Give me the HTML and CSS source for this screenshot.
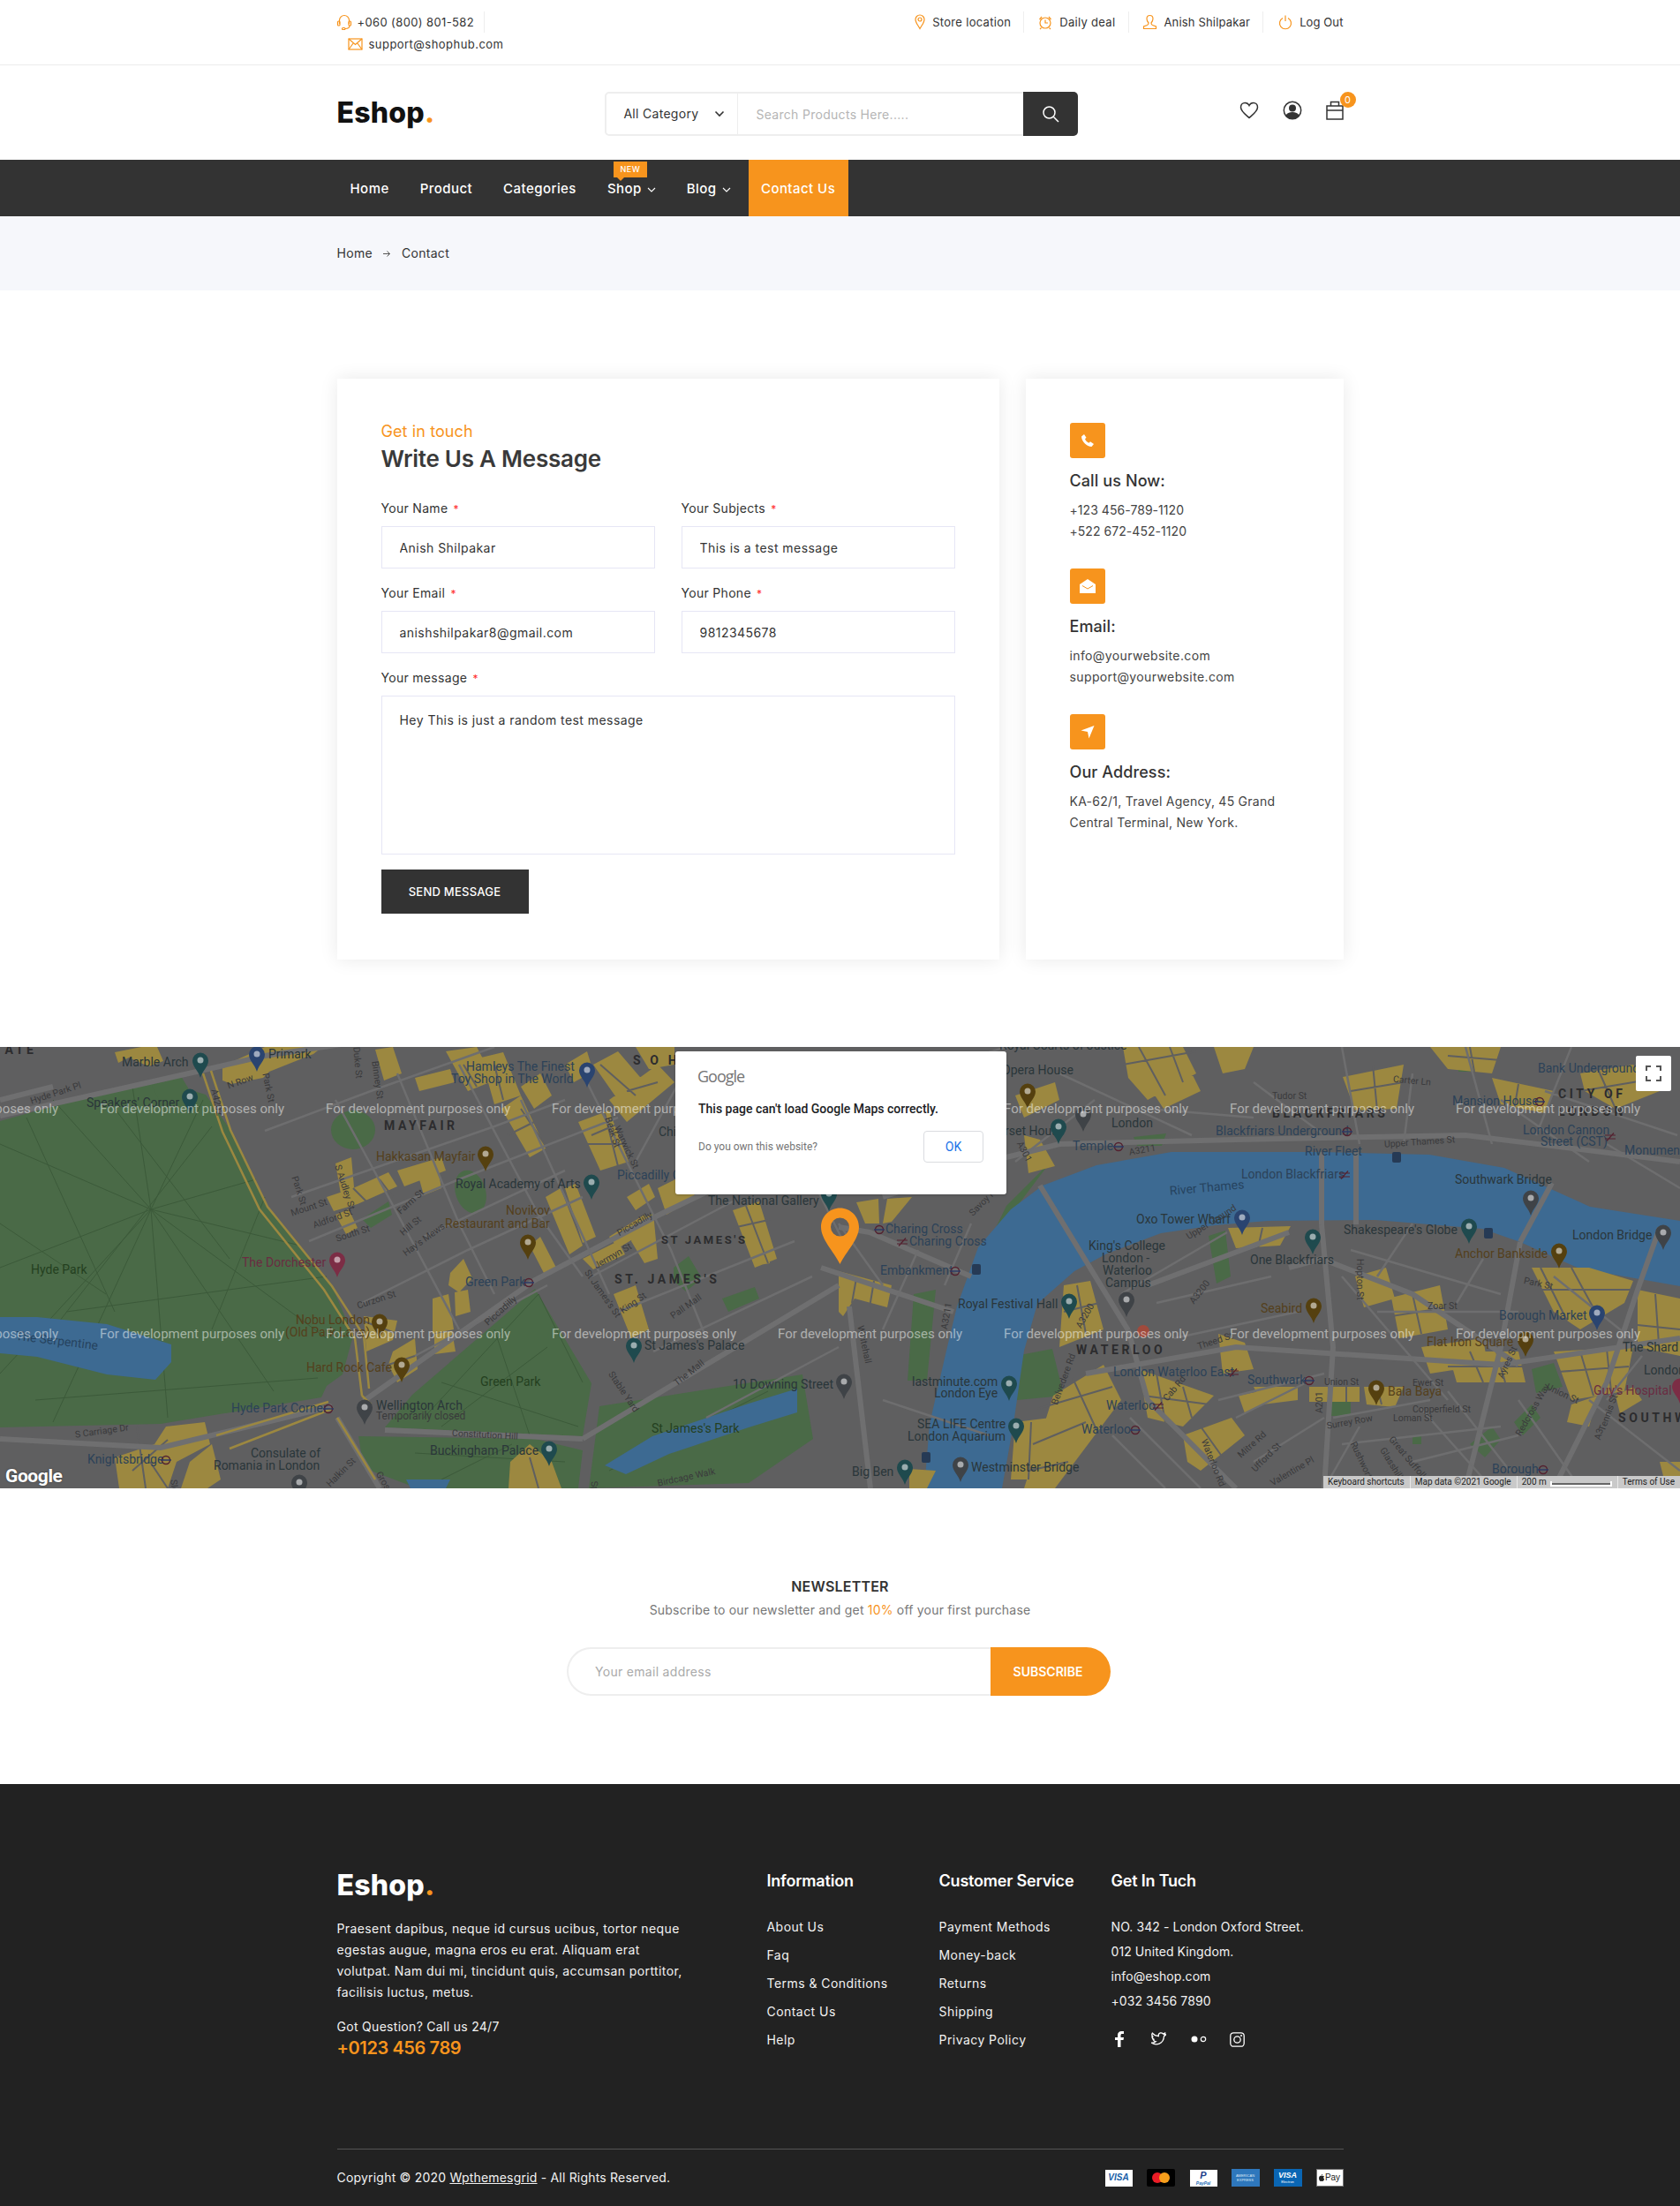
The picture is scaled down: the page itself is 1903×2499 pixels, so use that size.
FILE: index.html
```html
<!DOCTYPE html>
<html lang="en">
<head>
<meta charset="utf-8">
<title>Eshop - Contact</title>
<link rel="stylesheet" href="styles.css">
</head>
<body>
<header>
  <div class="topbar">
    <div class="wrap topbar-in">
      <ul class="top-left">
        <li class="top-phone"><svg class="ti" width="18" height="18" viewBox="0 0 18 18"><path d="M3.5 11V7a5.5 5.5 0 0 1 11 0v4"/><rect x="1.5" y="8" width="2.5" height="5" rx="1"/><rect x="14" y="8" width="2.5" height="5" rx="1"/><path d="M15 13c0 2.500-2.500 3.500-5 3.500"/><rect x="6.500" y="15.500" width="3.500" height="2" rx="1"/></svg>+060 (800) 801-582</li>
        <li class="top-mail"><svg class="ti" width="17" height="14" viewBox="0 0 17 14"><rect x="1" y="1" width="15" height="12"/><path d="M1 1l7.500 6.500L16 1M1 13l5.500-7.500M16 13l-5.500-7.500"/></svg>support@shophub.com</li>
      </ul>
      <ul class="top-right">
        <li class="sl"><svg class="ti" width="12" height="18" viewBox="0 0 12 18"><path d="M6 16.500C3.500 12 1 9.500 1 6a5 5 0 0 1 10 0c0 3.500-2.500 6-5 10.500z"/><circle cx="6" cy="6" r="2"/></svg>Store location</li>
        <li class="dd"><svg class="ti" width="16" height="17" viewBox="0 0 16 17"><circle cx="8" cy="9" r="6"/><path d="M8 5.500V9h3M1.500 5L4 2M14.500 5L12 2M3.500 14.500L2 16M12.500 14.500L14 16"/></svg>Daily deal</li>
        <li class="an"><svg class="ti" width="17" height="18" viewBox="0 0 17 18"><path d="M8.500 1.500c-2.300 0-3.500 1.700-3.500 3.800 0 2 1 3.500 2 4.700 0 1.500-.5 2-1.500 2.500L1.500 14v2.500h14V14l-4-1.500c-1-.5-1.500-1-1.500-2.500 1-1.200 2-2.700 2-4.700 0-2.100-1.200-3.800-3.500-3.800z"/></svg>Anish Shilpakar</li>
        <li class="lo"><svg class="ti" width="16" height="18" viewBox="0 0 16 18"><path d="M5 4.500a6.500 6.500 0 1 0 6 0M8 1.500V8"/></svg>Log Out</li>
      </ul>
    </div>
  </div>
  <div class="wrap middle">
    <a class="logo">Eshop<span>.</span></a>
    <div class="search">
      <div class="cat">All Category<svg width="12" height="8" viewBox="0 0 12 8"><path d="M1.500 1.500L6 6l4.500-4.500"/></svg></div>
      <input class="search-in" type="text" placeholder="Search Products Here.....">
      <button class="search-btn" aria-label="Search"><svg width="20" height="20" viewBox="0 0 20 20"><circle cx="8.500" cy="8.500" r="6.500"/><path d="M13.500 13.500L19 19"/></svg></button>
    </div>
    <div class="actions">
      <svg width="22" height="20" viewBox="0 0 22 20" class="act"><path d="M11 18.500C6 14 1.500 11 1.500 6.500 1.500 3.500 3.700 1.500 6.300 1.500c2 0 3.700 1 4.700 3 1-2 2.700-3 4.700-3 2.600 0 4.800 2 4.800 5 0 4.500-4.500 7.500-9.500 12z"/></svg>
      <svg width="22" height="22" viewBox="0 0 22 22" class="act"><circle cx="11" cy="11" r="9.700"/><circle class="fillc" cx="11" cy="8.500" r="4"/><path class="fillc" d="M3.500 17c1-3 4-4 7.500-4s6.500 1 7.500 4c-2 2.500-4.700 4-7.500 4s-5.500-1.500-7.500-4z"/></svg>
      <div class="cart"><svg width="20" height="22" viewBox="0 0 20 22" class="act"><rect x="1" y="6" width="18" height="15"/><path d="M1 11h18M5.500 6V1.500h9V6"/></svg><span class="badge">0</span></div>
    </div>
  </div>
  <nav class="nav">
    <ul class="wrap nav-in">
      <li class="n-home">Home</li>
      <li class="n-prod">Product</li>
      <li class="n-cat">Categories</li>
      <li class="n-shop">Shop<svg class="chev" width="10" height="7" viewBox="0 0 10 7"><path d="M1 1l4 4 4-4"/></svg><span class="new">NEW</span></li>
      <li class="n-blog">Blog<svg class="chev" width="10" height="7" viewBox="0 0 10 7"><path d="M1 1l4 4 4-4"/></svg></li>
      <li class="n-contact">Contact Us</li>
    </ul>
  </nav>
</header>

<section class="crumbs">
  <div class="wrap crumbs-in">Home<svg width="10" height="9" viewBox="0 0 10 9"><path d="M1 4.500h7.500M5.500 1.500l3 3-3 3"/></svg><span>Contact</span></div>
</section>

<main>
  <section class="wrap contact">
    <form class="card form-card">
      <p class="eyebrow">Get in touch</p>
      <h1>Write Us A Message</h1>
      <div class="fields">
        <label class="field"><span class="lab">Your Name <i>*</i></span><input type="text" value="Anish Shilpakar"></label>
        <label class="field"><span class="lab">Your Subjects <i>*</i></span><input type="text" value="This is a test message"></label>
        <label class="field"><span class="lab">Your Email <i>*</i></span><input type="text" value="anishshilpakar8@gmail.com"></label>
        <label class="field"><span class="lab">Your Phone <i>*</i></span><input type="text" value="9812345678"></label>
        <label class="field wide"><span class="lab">Your message <i>*</i></span><textarea>Hey This is just a random test message</textarea></label>
      </div>
      <button class="send" type="button">SEND MESSAGE</button>
    </form>
    <aside class="card info-card">
      <div class="info">
        <div class="ibox"><svg width="16" height="16" viewBox="0 0 16 16"><path d="M1 3.500L4 1l2.500 3.800L5 6.300c.8 2 2.500 3.600 4.500 4.500L11 9.300 15 12l-2.500 3C7 15 1 9 1 3.500z"/></svg></div>
        <h3>Call us Now:</h3>
        <p>+123 456-789-1120<br>+522 672-452-1120</p>
      </div>
      <div class="info">
        <div class="ibox"><svg width="20" height="18" viewBox="0 0 20 18"><path d="M1 7L10 1l9 6v10H1z"/><path class="env" d="M4 8.500l6 3.500 6-3.500"/></svg></div>
        <h3>Email:</h3>
        <p>info@yourwebsite.com<br>support@yourwebsite.com</p>
      </div>
      <div class="info">
        <div class="ibox"><svg width="16" height="16" viewBox="0 0 16 16"><path d="M15.500 1L9.500 15.500 8 8 .5 6.500z"/></svg></div>
        <h3>Our Address:</h3>
        <p>KA-62/1, Travel Agency, 45 Grand<br>Central Terminal, New York.</p>
      </div>
    </aside>
  </section>

  <section class="map">
    <svg class="map-svg" width="1903" height="500" viewBox="0 0 1903 500">
      <defs>
        <path id="pin" d="M0-9.500a9 9 0 0 1 9 9c0 7-6.500 11-9 19.500C-2.500 10.500-9 6.500-9-.5a9 9 0 0 1 9-9z"/>
        <g id="tube"><circle r="4.500" class="tb-r"/><path d="M-6 0h12" class="tb-b"/></g>
        <g id="rail"><path d="M-6-2H6M-6 2H6M-4 4.500L4-4.500" class="rl"/></g>
      </defs>
      <rect class="m-bg" width="1903" height="500"/>

      <!-- parks -->
      <g class="m-green">
        <path d="M0 84L97 57 176 37 233 54 261 94 303 181 376 271 400 327 388 371 370 384 364 397 182 427 0 431Z"/>
        <path d="M606 274L670 381 660 441 436 431 467 394Z"/>
        <path d="M406 441L606 444 660 457 655 500H473L412 477Z"/>
        <path d="M679 407L909 371 921 444 848 494 667 500Z"/>
        <ellipse cx="400" cy="94" rx="25" ry="22"/>
        <ellipse cx="533" cy="164" rx="17" ry="25" transform="rotate(-18 533 164)"/>
        <path d="M763 250L780 237 795 262 777 277 763 265Z"/>
        <path d="M818 285L855 272 860 285 825 300Z"/>
        <path d="M410 195L440 175 444 190 420 205Z"/>
        <path d="M172 44L205 33 220 58 185 70Z"/>
        <path d="M1369 214L1388 208 1394 260 1378 268Z"/>
        <path d="M1035 280L1060 275 1050 378 1028 378Z"/>
        <path d="M1150 350L1192 342 1205 395 1152 400Z"/>
        <path d="M1284 102L1321 98 1316 112 1288 112Z"/>
        <path d="M1650 0H1668V28H1652Z"/>
        <path d="M1140 180L1190 130 1145 190 1108 250 1100 262Z"/>
        <path d="M1505 395H1530V418H1508Z"/>
        <path d="M1672 352L1688 352 1690 372 1674 372Z"/>
        <path d="M1630 355H1660V365H1630Z" opacity=".6"/>
        <path d="M1665 450L1690 430 1700 445 1682 465Z" opacity=".9"/>
        <path d="M1715 425L1735 405 1745 420 1725 440Z" />
        <path d="M1735 365L1760 358 1770 385 1740 392Z"/>
        <path d="M1600 440H1610V450H1600Z"/>
        <path d="M1800 385L1815 365 1825 372 1810 395Z"/>
      </g>
      <!-- park paths -->
      <path class="m-park" d="M171 184L0 110M171 184L60 60M171 184L150 45M171 184L230 60M171 184L290 150M171 184L340 225M171 184L370 330M171 184L310 390M171 184L190 420M171 184L60 425M171 184L0 250M171 184L0 370M130 70L260 240M30 80L130 300M240 90L60 320M0 200L120 280M300 170L240 320M40 400L360 375M75 300L370 260M610 280L480 420M610 280L660 380M500 380L655 430M560 320L600 440M620 340L500 430M470 460L640 470M500 490L580 450M690 480L870 390"/>

      <!-- water -->
      <g class="m-water">
        <path d="M0 306H42L121 314 194 337V357L176 377 121 371 42 351 0 347Z"/>
        <path d="M685 474L739 441 848 404 903 387V414L848 431 758 461 709 484Z"/>
        <path d="M1181 157L1242 134 1327 119H1497L1619 122 1704 137 1801 181 1903 197V271L1789 251 1722 221 1679 206 1558 196 1436 197 1376 202 1315 211 1254 234 1217 254 1175 291 1160 344 1148 427 1135 500H1047L1053 427 1072 344 1084 294 1108 227 1145 184Z"/>
        <path d="M460 490H510L505 500H465Z"/>
      </g>

      <!-- retail buildings -->
      <path class="m-yellow" d="M130 6L160 0H178L185 16 168 22 146 12 134 18ZM252 22L300 0H365L355 8 305 28 298 35 262 42 252 38ZM425 3L445 0 455 30 435 38ZM470 35L510 25 515 40 475 50ZM505 5L540 0 560 38 530 50ZM545 12L570 6 590 55 560 65ZM568 70L590 55 618 115 600 125ZM590 45L612 30 625 55 605 70ZM655 85L690 72 712 130 680 140ZM672 20L700 5 730 40 700 60ZM690 60L745 20 764 40 710 85ZM720 0H764V20L735 25ZM640 20L665 5 672 28 650 40ZM380 132L398 125 402 170 388 178ZM370 170L400 160 440 142 450 158 405 178 378 186ZM380 190L395 184 405 205 392 212ZM450 140L500 125 505 140 458 158ZM475 150L497 143 500 160 480 168ZM618 170L635 160 660 225 645 235ZM640 160L652 155 675 215 660 222ZM600 225L612 215 630 250 618 260ZM660 240L700 220 708 235 672 252ZM690 215L730 190 738 205 700 228ZM720 200L740 188 745 240 730 245 715 220ZM710 170L735 155 742 170 720 185ZM745 160L775 145 788 170 755 190ZM510 256L525 240 535 262 520 278 508 270ZM490 285L508 280 514 320 490 325ZM515 278L530 275 533 300 516 305ZM492 325L512 322 516 345 492 348ZM412 305L450 310 445 332 415 345ZM445 345L470 330 473 365 450 380 440 360ZM188 430L232 425 238 450 200 470 190 500H135L130 465 175 450ZM240 450L250 490 235 500H205L215 470ZM600 450L625 470 636 500H576L578 470ZM695 280L720 270 735 320 715 330ZM830 185L860 175 880 240 855 250ZM847 218L868 214 872 245 855 248ZM970 176L995 172 996 200 980 200ZM1005 172L1033 170 1010 198 1000 200ZM1272 0H1340L1355 30 1300 60 1278 35ZM1375 0H1420L1410 25 1385 30ZM1305 50L1350 30 1360 50 1318 70ZM1521 34L1590 20 1582 70 1535 72ZM1620 0H1700L1690 30 1640 25ZM1690 35L1760 50 1750 75 1700 65ZM1790 30L1850 20 1880 50 1830 70 1795 50ZM1160 100L1178 105 1195 135 1165 143ZM1150 55L1195 40 1200 60 1160 80ZM1391 205L1462 203 1450 225 1400 228ZM950 254L1010 270 1005 295 968 285 955 305 950 300ZM1205 270L1235 265 1250 320 1200 340ZM1576 284L1631 270 1640 320 1585 330ZM1535 260L1570 250 1580 285 1545 295ZM1610 340L1680 330 1685 360 1620 370ZM1735 250L1800 250 1850 265 1840 290 1790 320 1760 300ZM1855 275L1903 285V350L1855 340ZM1640 345H1720L1728 380H1650ZM1760 345L1850 340 1840 390 1780 400ZM1380 325L1410 335 1420 365 1385 370ZM1193 395L1250 360 1270 400 1225 460 1195 500H1160ZM1150 425L1190 420 1185 490 1145 490ZM1290 365L1375 395 1340 430 1300 420ZM1340 440L1395 420 1410 440 1360 480 1345 470ZM1420 385H1470V400L1430 405ZM1483 385H1540V402H1483ZM1545 385H1590L1580 408 1548 405ZM1403 395L1450 385V395L1410 415ZM1780 405L1810 395 1800 430 1775 425ZM1830 395L1850 385 1860 400 1835 415ZM1880 470H1903V490H1885ZM1030 478L1060 480 1050 500H1030Z"/>
      <!-- street gaps that break the retail blocks up -->
      <path class="m-cut" d="M1272 20L1355 5M1290 0L1320 55M1325 0L1340 40M1530 50L1590 40M1555 20L1560 72M1640 10L1700 15M1665 0L1670 28M1810 25L1830 70M1790 50L1880 35M1720 42L1715 72M1745 250L1775 310M1780 250L1810 305M1735 275L1850 275M1875 280L1880 350M1855 315L1903 320M1665 345L1680 380M1695 345L1705 380M1640 362H1728M1790 345L1805 395M1820 342L1825 390M1765 368L1845 362M1600 280L1610 325M1576 305L1640 295M1215 375L1245 440M1175 410L1260 385M1170 450L1230 425M1165 480L1210 470M1168 425L1165 490M1310 370L1320 425M1340 385L1350 420M1295 395L1370 405M1360 430L1385 465M1505 385V402M1525 385V402M1560 385L1565 405M1220 270L1230 325M1205 300L1245 290M1430 205L1425 228M970 262L965 290M990 265L985 295M190 445L150 480M170 470L190 500M155 430L165 500M600 465L610 500M830 205L875 195M845 180L870 245M680 20L720 55M710 50L745 40M670 100L705 85M685 75L700 135M660 110L705 110M620 115L590 70M605 85L575 100M570 60L560 20M525 20L540 45M400 160L415 175M430 150L445 170M410 310L450 325M440 360L470 350"/>

      <!-- roads -->
      <path class="m-road3" d="M0 78L236 25 300 10 400-5M412 401L606 264 745 191 830 150M436 434L660 444M660 444L950 270M0 444L182 454 376 407M382 420L430 500M962 294L986 500M1178 157L1278 321M1497 119V201M1536 119V201M1758 154L1722 221M1880 205L1855 275M1000 170L1120 130 1200 110 1400 105 1660 100 1903 130M1278 321L1300 400 1400 500M1497 201L1510 340 1500 500M1722 221L1700 340 1660 500M1855 275L1820 380 1760 500M1300 270L1460 210M1460 250L1497 240 1600 280 1720 360M1100 260L985 210 950 204M1230 370L1400 340 1700 360 1903 330M0 60L60 45M930 250L1080 300"/>
      <path class="m-road2" d="M300 95L420 50 560 0M330 170L560 90 640 60M350 220L520 150 700 80M410 290L530 230 660 170M470 350L620 270M480 215L640 140M380 60L440 170 520 320M450 30L520 200 560 280M520 20L610 190 660 260M590 60L690 280M660 30L760 230 800 330M720 130L780 20M670 260L830 175M700 300L900 220M740 345L920 260M800 420L950 340M880 70L940 190 960 230M790 100L900 60M820 160L1000 100M1010 40L1140 0M1200 30L1350 100M1240 60L1150 130M1300 70L1420 80M1420 40L1500 100M1520 0L1540 110M1600 30L1590 110M1660 0L1690 110M1750 50L1900 100M1780 0L1740 100M1820 110L1903 160M1700 60L1800 130M1270 280L1390 210M1310 290L1440 260M1330 330L1470 300M1530 230L1700 280M1560 300L1720 300M1520 260L1640 400M1600 200L1560 260M1760 260L1860 340M1680 240L1650 290M1380 400L1500 370M1510 420L1620 400M1520 450L1700 430M1610 410L1690 500M1640 390L1710 480M1720 400L1790 500M1800 400L1903 480M1860 350L1820 400M1000 320L1040 230M1000 400L1120 440M1000 270L950 200M1600 470L1720 440M1070 270L1100 200M1280 420L1360 500M1260 440L1320 500M1400 420L1480 380M1420 470L1500 420M1540 430L1500 500"/>
      <path class="m-gold" d="M239 27L261 94 303 181 376 271 412 327 418 387M230 30L252 96 294 184 367 275 402 330 410 395M260 455L376 410M245 440L372 402M382 420L425 490M410 395L420 405"/>

      <!-- labels -->
      <g class="ml">
        <text x="138" y="18">Marble Arch</text><text x="304" y="9">Primark</text>
        <text x="98" y="64">Speakers' Corner</text><text x="516" y="156">Royal Academy of Arts</text>
        <text x="746" y="97">Chi</text><text x="802" y="175">The National Gallery</text>
        <text x="730" y="339">St James's Palace</text><text x="426" y="407">Wellington Arch</text>
        <text x="487" y="458">Buckingham Palace</text><text x="830" y="383">10 Downing Street</text>
        <text x="284" y="461">Consulate of</text><text x="242" y="475">Romania in London</text>
        <text x="1132" y="-1">Royal Courts of Justice</text><text x="1135" y="27">Opera House</text>
        <text x="1259" y="87">London</text><text x="1102" y="96">Somerset House</text>
        <text x="1648" y="151">Southwark Bridge</text><text x="1522" y="208">Shakespeare's Globe</text>
        <text x="1781" y="214">London Bridge</text><text x="1233" y="226">King's College</text>
        <text x="1248" y="240">London -</text><text x="1249" y="254">Waterloo</text><text x="1252" y="268">Campus</text>
        <text x="1416" y="242">One Blackfriars</text><text x="1085" y="292">Royal Festival Hall</text>
        <text x="1033" y="380">lastminute.com</text><text x="1058" y="393">London Eye</text>
        <text x="1039" y="428">SEA LIFE Centre</text><text x="1028" y="442">London Aquarium</text>
        <text x="1100" y="477">Westminster Bridge</text><text x="965" y="482">Big Ben</text>
        <text x="1838" y="341">The Shard</text><text x="1862" y="367">London</text>
        <text x="1287" y="196">Oxo Tower Wharf</text>
      </g>
      <g class="ml mlb">
        <text x="528" y="23">Hamleys The Finest</text><text x="511" y="37">Toy Shop in The World</text>
        <text x="699" y="146">Piccadilly Circus</text><text x="527" y="267">Green Park</text>
        <text x="262" y="410">Hyde Park Corner</text><text x="99" y="468">Knightsbridge</text>
        <text x="1742" y="25">Bank Underground</text><text x="1645" y="62">Mansion House</text>
        <text x="1215" y="113">Temple</text><text x="1377" y="96">Blackfriars Underground</text>
        <text x="1725" y="95">London Cannon</text><text x="1745" y="108">Street (CST)</text>
        <text x="1840" y="118">Monument</text><text x="1478" y="119">River Fleet</text>
        <text x="1406" y="145">London Blackfriars</text><text x="1003" y="207">Charing Cross</text>
        <text x="1030" y="221">Charing Cross</text><text x="997" y="254">Embankment</text>
        <text x="1698" y="305">Borough Market</text><text x="1261" y="369">London Waterloo East</text>
        <text x="1413" y="378">Southwark</text><text x="1253" y="407">Waterloo</text><text x="1225" y="434">Waterloo</text>
        <text x="1690" y="479">Borough</text>
      </g>
      <g class="ml mlbr">
        <text x="426" y="125">Hakkasan Mayfair</text><text x="573" y="186">Novikov</text>
        <text x="504" y="201">Restaurant and Bar</text><text x="335" y="310">Nobu London</text>
        <text x="323" y="324">(Old Park Lane)</text><text x="347" y="364">Hard Rock Cafe</text>
        <text x="1648" y="235">Anchor Bankside</text><text x="1428" y="297">Seabird</text>
        <text x="1616" y="335">Flat Iron Square</text><text x="1572" y="391">Bala Baya</text>
      </g>
      <g class="ml mlp"><text x="274" y="245">The Dorchester</text><text x="1805" y="390">Guy's Hospital</text></g>
      <g class="ml mlg"><text x="35" y="253">Hyde Park</text><text x="544" y="380">Green Park</text><text x="738" y="433">St James's Park</text></g>
      <g class="ml mlw">
        <text x="18" y="328" transform="rotate(7 18 328)">The Serpentine</text>
        <text x="1325" y="164" transform="rotate(-5 1325 164)">River Thames</text>
      </g>
      <g class="mh">
        <text x="717" y="16">S O H O</text><text x="435" y="90">MAYFAIR</text><text x="-6" y="4">TATE</text>
        <text x="749" y="220" class="mh2">ST JAMES'S</text><text x="696" y="264">ST. JAMES'S</text>
        <text x="1765" y="54">CITY OF</text><text x="1765" y="74">LONDON</text>
        <text x="1441" y="76">BLACKFRIARS</text><text x="1219" y="344">WATERLOO</text><text x="1833" y="421">SOUTHW</text>
      </g>
      <g class="ms">
        <text x="426" y="419" class="ms12">Temporarily closed</text>
        <text x="35" y="62" transform="rotate(-18 35 62)">Hyde Park Pl</text>
        <text x="85" y="440" transform="rotate(-8 85 440)">S Carriage Dr</text>
        <text x="242" y="48" transform="rotate(78 242 48)">A4202</text>
        <text x="300" y="30" transform="rotate(78 300 30)">Park St</text>
        <text x="403" y="0" transform="rotate(85 403 0)">Duke St</text>
        <text x="424" y="16" transform="rotate(82 424 16)">Binney St</text>
        <text x="258" y="45" transform="rotate(-20 258 45)">N Row</text>
        <text x="700" y="212" transform="rotate(-30 700 212)">Piccadilly</text>
        <text x="551" y="314" transform="rotate(-42 551 314)">Piccadilly</text>
        <text x="405" y="294" transform="rotate(-18 405 294)">Curzon St</text>
        <text x="761" y="306" transform="rotate(-35 761 306)">Pall Mall</text>
        <text x="765" y="382" transform="rotate(-38 765 382)">The Mall</text>
        <text x="691" y="369" transform="rotate(56 691 369)">Stable Yard</text>
        <text x="664" y="254" transform="rotate(55 664 254)">St James's St</text>
        <text x="674" y="249" transform="rotate(-30 674 249)">Jermyn St</text>
        <text x="704" y="300" transform="rotate(-35 704 300)">King St</text>
        <text x="330" y="189" transform="rotate(-18 330 189)">Mount St</text>
        <text x="355" y="203" transform="rotate(-20 355 203)">Aldford St</text>
        <text x="381" y="218" transform="rotate(-18 381 218)">South St</text>
        <text x="452" y="188" transform="rotate(-42 452 188)">Farm St</text>
        <text x="455" y="212" transform="rotate(-40 455 212)">Hill St</text>
        <text x="458" y="235" transform="rotate(-36 458 235)">Hay's Mews</text>
        <text x="382" y="134" transform="rotate(72 382 134)">S Audley St</text>
        <text x="333" y="147" transform="rotate(72 333 147)">Park St</text>
        <text x="688" y="80" transform="rotate(72 688 80)">Beak St</text>
        <text x="698" y="90" transform="rotate(65 698 90)">Warwick St</text>
        <text x="512" y="438" transform="rotate(3 512 438)">Constitution Hill</text>
        <text x="1441" y="56">Tudor St</text>
        <text x="1578" y="37" transform="rotate(5 1578 37)">Carter Ln</text>
        <text x="1568" y="111" transform="rotate(-4 1568 111)">Upper Thames St</text>
        <text x="1279" y="120" transform="rotate(-10 1279 120)">A3211</text>
        <text x="1154" y="108" transform="rotate(62 1154 108)">A301</text>
        <text x="1350" y="290" transform="rotate(-52 1350 290)">A3200</text>
        <text x="1070" y="320" transform="rotate(-80 1070 320)">A3211</text>
        <text x="1540" y="240" transform="rotate(90 1540 240)">Hopton St</text>
        <text x="1726" y="265" transform="rotate(12 1726 265)">Park St</text>
        <text x="1617" y="294">Zoar St</text>
        <text x="1357" y="340" transform="rotate(-18 1357 340)">Theed St</text>
        <text x="1345" y="216" transform="rotate(-32 1345 216)">Upper Ground</text>
        <text x="974" y="316" transform="rotate(78 974 316)">Whitehall</text>
        <text x="1195" y="405" transform="rotate(-70 1195 405)">Belvedere Rd</text>
        <text x="1363" y="445" transform="rotate(68 1363 445)">Waterloo Rd</text>
        <text x="1500" y="380">Union St</text>
        <text x="1495" y="415" transform="rotate(-90 1495 415)">A201</text>
        <text x="1600" y="381">Ewer St</text>
        <text x="1600" y="411">Copperfield St</text><text x="1578" y="421">Loman St</text>
        <text x="1503" y="430" transform="rotate(-10 1503 430)">Surrey Row</text>
        <text x="1532" y="448" transform="rotate(65 1532 448)">Rushworth</text>
        <text x="1575" y="443" transform="rotate(50 1575 443)">Great Suffolk St</text>
        <text x="1565" y="455" transform="rotate(58 1565 455)">Glasshill St</text>
        <text x="1404" y="464" transform="rotate(-42 1404 464)">Mitre Rd</text>
        <text x="1420" y="480" transform="rotate(-45 1420 480)">Ufford St</text>
        <text x="1440" y="495" transform="rotate(-30 1440 495)">Valentine Pl</text>
        <text x="1320" y="400" transform="rotate(-50 1320 400)">Cab Rd</text>
        <text x="1700" y="375" transform="rotate(-65 1700 375)">Ayres St</text>
        <text x="1720" y="440" transform="rotate(-60 1720 440)">Redcross Way</text>
        <text x="1752" y="385" transform="rotate(25 1752 385)">Union St</text>
        <text x="1810" y="445" transform="rotate(-75 1810 445)">A3</text>
        <text x="1815" y="435" transform="rotate(-70 1815 435)">Tennis St</text>
        <text x="1222" y="318" transform="rotate(-60 1222 318)">A3200</text>
        <text x="1100" y="190" transform="rotate(-45 1100 190)">Savoy Pl</text>
        <text x="745" y="495" transform="rotate(-12 745 495)">Birdcage Walk</text>
        <text x="372" y="497" transform="rotate(-45 372 497)">Halkin St</text>
        <text x="672" y="492" transform="rotate(80 672 492)">Spur Rd</text>
        <text x="196" y="490" transform="rotate(85 196 490)">Sloane St</text>
        <text x="428" y="482" transform="rotate(60 428 482)">Grosvenor Pl</text>
      </g>

      <!-- pins -->
      <g class="pt">
        <use href="#pin" x="227" y="16"/><use href="#pin" x="215" y="57"/><use href="#pin" x="670" y="154"/><use href="#pin" x="718" y="339"/><use href="#pin" x="622" y="456"/><use href="#pin" x="939" y="167"/><use href="#pin" x="1199" y="91"/><use href="#pin" x="1487" y="216"/><use href="#pin" x="1664" y="204"/><use href="#pin" x="1211" y="289"/><use href="#pin" x="1143" y="382"/><use href="#pin" x="1151" y="430"/><use href="#pin" x="1025" y="477"/>
      </g>
      <g class="pb"><use href="#pin" x="291" y="9"/><use href="#pin" x="665" y="27"/><use href="#pin" x="1407" y="194"/><use href="#pin" x="1809" y="302"/></g>
      <g class="pbr"><use href="#pin" x="550" y="122"/><use href="#pin" x="598" y="222"/><use href="#pin" x="430" y="312"/><use href="#pin" x="455" y="361"/><use href="#pin" x="1164" y="51"/><use href="#pin" x="1766" y="232"/><use href="#pin" x="1488" y="294"/><use href="#pin" x="1728" y="332"/><use href="#pin" x="1559" y="387"/></g>
      <g class="pg"><use href="#pin" x="413" y="409"/><use href="#pin" x="339" y="494"/><use href="#pin" x="1227" y="77"/><use href="#pin" x="1734" y="172"/><use href="#pin" x="1884" y="211"/><use href="#pin" x="1276" y="287"/><use href="#pin" x="956" y="380"/><use href="#pin" x="1088" y="474"/></g>
      <g class="ppk"><use href="#pin" x="382" y="242"/><use href="#pin" x="1903" y="385"/></g>
      <g class="pin-dots">
        <circle cx="227" cy="15" r="3.500"/><circle cx="215" cy="56" r="3.500"/><circle cx="670" cy="153" r="3.500"/><circle cx="718" cy="338" r="3.500"/><circle cx="622" cy="455" r="3.500"/><circle cx="939" cy="166" r="3.500"/><circle cx="1199" cy="90" r="3.500"/><circle cx="1487" cy="215" r="3.500"/><circle cx="1664" cy="203" r="3.500"/><circle cx="1211" cy="288" r="3.500"/><circle cx="1143" cy="381" r="3.500"/><circle cx="1151" cy="429" r="3.500"/><circle cx="1025" cy="476" r="3.500"/><circle cx="291" cy="8" r="3.500"/><circle cx="665" cy="26" r="3.500"/><circle cx="1407" cy="193" r="3.500"/><circle cx="1809" cy="301" r="3.500"/><circle cx="550" cy="121" r="3.500"/><circle cx="598" cy="221" r="3.500"/><circle cx="430" cy="311" r="3.500"/><circle cx="455" cy="360" r="3.500"/><circle cx="1164" cy="50" r="3.500"/><circle cx="1766" cy="231" r="3.500"/><circle cx="1488" cy="293" r="3.500"/><circle cx="1728" cy="331" r="3.500"/><circle cx="1559" cy="386" r="3.500"/><circle cx="413" cy="408" r="3.500"/><circle cx="339" cy="493" r="3.500"/><circle cx="1227" cy="76" r="3.500"/><circle cx="1734" cy="171" r="3.500"/><circle cx="1884" cy="210" r="3.500"/><circle cx="1276" cy="286" r="3.500"/><circle cx="956" cy="379" r="3.500"/><circle cx="1088" cy="473" r="3.500"/><circle cx="382" cy="241" r="3.500"/>
      </g>
      <g class="boats"><rect x="1577" y="119" width="10" height="12" rx="2"/><rect x="1681" y="205" width="10" height="12" rx="2"/><rect x="1101" y="246" width="10" height="12" rx="2"/><rect x="1044" y="459" width="10" height="12" rx="2"/></g>
      <g>
        <use href="#tube" x="599" y="267"/><use href="#tube" x="372" y="410"/><use href="#tube" x="188" y="468"/><use href="#tube" x="1744" y="62"/><use href="#tube" x="1526" y="96"/><use href="#tube" x="1267" y="113"/><use href="#tube" x="996" y="207"/><use href="#tube" x="1082" y="254"/><use href="#tube" x="1483" y="378"/><use href="#tube" x="1286" y="434"/><use href="#tube" x="1748" y="479"/>
        <use href="#rail" x="1523" y="145"/><use href="#rail" x="1824" y="102"/><use href="#rail" x="1022" y="221"/><use href="#rail" x="1397" y="369"/><use href="#rail" x="1312" y="407"/>
      </g>
      <circle class="hosp" cx="1295" cy="322" r="7"/>

      <!-- watermark -->
      <g class="wm">
        <text x="-143" y="71">For development purposes only</text><text x="113" y="71">For development purposes only</text><text x="369" y="71">For development purposes only</text><text x="625" y="71">For development purposes only</text><text x="881" y="71">For development purposes only</text><text x="1137" y="71">For development purposes only</text><text x="1393" y="71">For development purposes only</text><text x="1649" y="71">For development purposes only</text>
        <text x="-143" y="326">For development purposes only</text><text x="113" y="326">For development purposes only</text><text x="369" y="326">For development purposes only</text><text x="625" y="326">For development purposes only</text><text x="881" y="326">For development purposes only</text><text x="1137" y="326">For development purposes only</text><text x="1393" y="326">For development purposes only</text><text x="1649" y="326">For development purposes only</text>
      </g>

      <path class="marker" fill-rule="evenodd" d="M951.500 182.500c11.900 0 21.500 9.600 21.500 21.500 0 14-14 27-21.500 42-7.500-15-21.500-28-21.500-42 0-11.900 9.600-21.500 21.500-21.500zm0 11a10.500 10.500 0 1 0 0 21 10.500 10.500 0 0 0 0-21z"/>
    </svg>

    <div class="gm-dialog">
      <div class="gm-logo">Google</div>
      <div class="gm-msg">This page can't load Google Maps correctly.</div>
      <div class="gm-row"><span>Do you own this website?</span><button type="button">OK</button></div>
    </div>
    <button class="gm-full" type="button" aria-label="Full screen"><svg width="18" height="18" viewBox="0 0 18 18"><path d="M1 6V1h5M12 1h5v5M17 12v5h-5M6 17H1v-5"/></svg></button>
    <div class="gm-mark">Google</div>
    <div class="gm-attr">
      <span>Keyboard shortcuts</span><span>Map data ©2021 Google</span><span class="scale">200 m<i></i></span><span>Terms of Use</span>
    </div>
  </section>

  <section class="news">
    <h4>NEWSLETTER</h4>
    <p>Subscribe to our newsletter and get <b>10%</b> off your first purchase</p>
    <form class="news-form">
      <input type="email" placeholder="Your email address">
      <button type="button">SUBSCRIBE</button>
    </form>
  </section>
</main>

<footer class="footer">
  <div class="wrap f-main">
    <div class="f-about">
      <a class="logo logo-w">Eshop<span>.</span></a>
      <p class="f-para">Praesent dapibus, neque id cursus ucibus, tortor neque<br>egestas augue, magna eros eu erat. Aliquam erat<br>volutpat. Nam dui mi, tincidunt quis, accumsan porttitor,<br>facilisis luctus, metus.</p>
      <p class="f-q">Got Question? Call us 24/7</p>
      <p class="f-phone">+0123 456 789</p>
    </div>
    <div>
      <h5>Information</h5>
      <ul class="f-links"><li>About Us</li><li>Faq</li><li>Terms &amp; Conditions</li><li>Contact Us</li><li>Help</li></ul>
    </div>
    <div>
      <h5>Customer Service</h5>
      <ul class="f-links"><li>Payment Methods</li><li>Money-back</li><li>Returns</li><li>Shipping</li><li>Privacy Policy</li></ul>
    </div>
    <div>
      <h5>Get In Tuch</h5>
      <ul class="f-addr"><li>NO. 342 - London Oxford Street.</li><li>012 United Kingdom.</li><li>info@eshop.com</li><li>+032 3456 7890</li></ul>
      <div class="social">
        <svg width="10" height="18" viewBox="0 0 10 18" class="s-f"><path d="M3 18V10H0V7h3V4.500C3 1.500 4.800 0 7.300 0H10v3H8.200C7 3 6.500 3.600 6.500 4.700V7H10l-.5 3h-3v8z"/></svg>
        <svg width="17" height="16" viewBox="0 0 17 16" class="s-t"><path d="M16 2.500l-1.700.5c.6-.5 1-1 1.200-1.800-1 .5-1.500.7-2 .8C12.500 1 11.500.7 10.500.9 9 1.300 8 2.700 8.300 4.700 5.500 4.500 3 3.200 1.300 1.200.5 2.700.9 4.500 2.300 5.500L1 5.200c0 1.500 1 2.800 2.500 3.300l-1.300.1c.5 1.300 1.600 2 3 2.200-1.300 1-2.800 1.500-4.700 1.400 5 3.200 13.500 1.500 14-7.500.8-.6 1.500-1.300 2.500-2.200z"/></svg>
        <svg width="18" height="8" viewBox="0 0 18 8" class="s-fl"><circle cx="4" cy="4" r="3.500"/><circle class="ring" cx="14" cy="4" r="2.700"/></svg>
        <svg width="17" height="17" viewBox="0 0 17 17" class="s-i"><rect x=".8" y=".8" width="15.400" height="15.400" rx="3.500"/><circle cx="8.500" cy="8.500" r="3.700"/><circle class="dot" cx="13" cy="4" r="1"/></svg>
      </div>
    </div>
  </div>
  <div class="wrap f-bottom">
    <p>Copyright © 2020 <a>Wpthemesgrid</a> - All Rights Reserved.</p>
    <div class="pay">
      <span class="p-card p-white p-w30"><b class="visa">VISA</b></span>
      <span class="p-card p-mc"><svg width="20" height="12" viewBox="0 0 20 12"><circle cx="6" cy="6" r="6" class="mc1"/><circle cx="14" cy="6" r="6" class="mc2"/></svg></span>
      <span class="p-card p-white p-w30 p-pp"><b class="pp">P</b><em>PayPal</em></span>
      <span class="p-card p-amex"><em>AMERICAN</em><em>EXPRESS</em></span>
      <span class="p-card p-vb"><b>VISA</b><em>Electron</em></span>
      <span class="p-card p-white p-ap"><svg width="6" height="8" viewBox="0 0 6 8"><path d="M4.200 0c0 1-.7 1.700-1.500 1.700C2.700.8 3.400.1 4.200 0zM3 2c.5 0 .9-.3 1.500-.3.700 0 1.200.4 1.500.9-1.200.7-1 2.400.2 2.900C5.800 6.600 5 8 4.300 8c-.5 0-.7-.3-1.300-.3S2.200 8 1.700 8C.8 8 0 6 0 4.600 0 3 .9 1.800 2 1.800c.4 0 .7.200 1 .2z"/></svg>Pay</span>
    </div>
  </div>
</footer>
</body>
</html>
```

FILE: styles.css
```css
* { box-sizing: border-box; }
html, body { margin: 0; padding: 0; }
body { font-family: Inter, "Noto Sans", sans-serif; color: #333; background: #fff; font-size: 14px; line-height: 24px; letter-spacing: .3px; width: 1903px; overflow-x: hidden; }
ul { list-style: none; margin: 0; padding: 0; }
p, h1, h3, h4, h5 { margin: 0; }
input, textarea, button { font-family: inherit; letter-spacing: inherit; }
.wrap { width: 1140px; margin-left: auto; margin-right: auto; }

/* top bar */
.topbar { height: 74px; border-bottom: 1px solid #ececec; }
.topbar-in { display: flex; justify-content: space-between; font-size: 13px; color: #333; letter-spacing: .38px; }
.ti { fill: none; stroke: #f7941d; stroke-width: 1.200; flex: none; }
.top-left { padding-top: 13px; }
.top-phone, .top-mail { display: flex; align-items: center; height: 24px; }
.top-phone { width: 168px; border-right: 1px solid #eee; gap: 6px; margin-left: -1px; }
.top-mail { margin-left: 12px; margin-top: 1px; gap: 7px; height: 23px; letter-spacing: .46px; }
.top-right { display: flex; padding-top: 13px; height: 37px; }
.top-right li { display: flex; align-items: center; gap: 9px; height: 24px; border-right: 1px solid #eee; }
.top-right li:last-child { border-right: 0; }
.top-right .sl { padding-right: 14px; gap: 8px; letter-spacing: .3px; }
.top-right .dd { padding: 0 15px 0 16px; gap: 8px; letter-spacing: .3px; }
.top-right .an { padding: 0 14px 0 15px; gap: 7px; letter-spacing: .18px; }
.top-right .lo { padding-left: 17px; gap: 8px; letter-spacing: .1px; }

/* middle */
.middle { height: 107px; display: flex; align-items: center; position: relative; }
.logo { font-size: 32px; line-height: 40px; font-weight: 800; color: #111; letter-spacing: .2px; display: block; }
.middle .logo { margin-top: 1px; }
.logo span { color: #f7941d; }
.logo-w { color: #fff; }
.search { margin-left: 193px; display: flex; width: 536px; height: 50px; border: 2px solid #eee; border-radius: 5px; margin-top: 3px; }
.cat { width: 149px; border-right: 1px solid #eee; display: flex; align-items: center; justify-content: space-between; padding: 0 14px 0 19px; font-size: 14px; color: #333; }
.cat svg { fill: none; stroke: #333; stroke-width: 1.600; }
.search-in { flex: 1; border: 0; outline: 0; min-width: 0; padding: 0 0 0 20px; font-size: 14px; background: transparent; }
.search-in::placeholder { color: #b5b5b5; opacity: 1; }
.search-btn { width: 62px; height: 50px; margin: -2px -2px -2px 0; background: #333; border: 0; border-radius: 0 5px 5px 0; display: flex; align-items: center; justify-content: center; padding: 0; }
.search-btn svg { fill: none; stroke: #fff; stroke-width: 1.500; }
.actions { margin-left: auto; display: flex; align-items: center; gap: 27px; margin-top: -6px; }
.act { fill: none; stroke: #333; stroke-width: 1.500; display: block; }
.act .fillc { fill: #333; stroke: none; }
.cart { position: relative; }
.badge { position: absolute; top: -10px; right: -14px; width: 18px; height: 18px; border-radius: 50%; background: #f7941d; color: #fff; font-size: 11px; line-height: 18px; text-align: center; letter-spacing: 0; }

/* nav */
.nav { background: #333; height: 64px; }
.nav-in { display: flex; height: 64px; align-items: center; color: #fff; font-size: 15px; font-weight: 500; letter-spacing: .45px; }
.nav-in li { display: flex; align-items: center; position: relative; height: 64px; padding-top: 2px; }
.n-home { margin-left: 15px; margin-right: 35px; }
.n-prod, .n-cat { margin-right: 35px; }
.n-shop { margin-right: 35px; gap: 6px; }
.n-blog { margin-right: 20px; gap: 6px; }
.n-contact { background: #f7941d; width: 113px; justify-content: center; }
.chev { fill: none; stroke: #fff; stroke-width: 1.100; margin-top: 2px; }
.new { position: absolute; top: 2px; left: 7px; width: 38px; height: 18px; background: #f7941d; color: #fff; font-size: 9px; line-height: 18px; text-align: center; font-weight: 500; }
.new::after { content: ""; position: absolute; left: 4px; top: 18px; border: 4px solid transparent; border-top-color: #f7941d; border-bottom: 0; }

/* breadcrumb */
.crumbs { background: #f6f7fb; height: 84px; }
.crumbs-in { display: flex; align-items: center; height: 84px; font-size: 14px; color: #333; }
.crumbs-in svg { fill: none; stroke: #555; stroke-width: 1; margin: 0 12px 0 11px; }

/* contact */
.contact { display: grid; grid-template-columns: 750px 360px; gap: 30px; padding: 100px 0 99px; }
.card { background: #fff; box-shadow: 0 0 20px rgba(0, 0, 0, .09); height: 658px; }
.form-card { padding: 48px 50px 0; }
.eyebrow { color: #f7941d; font-size: 18px; letter-spacing: .1px; }
h1 { font-size: 26px; line-height: 36px; font-weight: 600; margin-top: 1px; color: #3a3a3a; letter-spacing: -.25px; }
.fields { display: grid; grid-template-columns: 310px 310px; column-gap: 30px; margin-top: 26px; }
.field { display: block; margin-bottom: 16px; }
.field.wide { grid-column: span 2; margin-bottom: 0; }
.lab { display: block; font-size: 14px; line-height: 24px; margin-bottom: 7px; color: #333; }
.lab i { color: #ff2c2c; font-style: normal; font-size: 12px; margin-left: 2px; }
.field input, .field textarea { display: block; width: 100%; border: 1px solid #e6e6f5; background: #fff; color: #333; font-size: 14px; outline: 0; padding: 0 20px; border-radius: 0; letter-spacing: .45px; }
.field input { height: 48px; }
.field textarea { height: 180px; padding: 15px 20px; resize: none; line-height: 24px; }
.send { display: block; margin-top: 17px; width: 167px; height: 50px; background: #333; color: #fff; border: 0; font-size: 13px; font-weight: 500; padding: 0; letter-spacing: .25px; }
.info-card { padding: 50px; display: flex; flex-direction: column; gap: 30px; }
.ibox { width: 40px; height: 40px; background: #f7941d; border-radius: 3px; display: flex; align-items: center; justify-content: center; }
.ibox svg { fill: #fff; }
.ibox .env { fill: none; stroke: #f7941d; stroke-width: 1; }
.info h3 { font-size: 18px; font-weight: 500; line-height: 24px; margin-top: 14px; letter-spacing: .1px; }
.info p { margin-top: 9px; font-size: 14px; line-height: 24px; color: #444; letter-spacing: .25px; }
.info:first-child p { letter-spacing: .05px; }
.info:nth-child(2) p { letter-spacing: .38px; }

/* map */
.map { height: 500px; position: relative; overflow: hidden; background: #5d5d5d; letter-spacing: 0; }
.map-svg { display: block; }
.m-bg { fill: #5f5f60; }
.m-green path, .m-green ellipse { fill: #4a6a47; }
.m-park { fill: none; stroke: #3c5a3a; stroke-width: 1; }
.m-water path { fill: #3d6a92; }
.m-yellow { fill: #9c8840; }
.m-cut { fill: none; stroke: #5f5f60; stroke-width: 2; }
.m-road3 { fill: none; stroke: #6f6f70; stroke-width: 6; }
.m-road2 { fill: none; stroke: #6e6e6f; stroke-width: 2.500; }
.m-gold { fill: none; stroke: #9c8840; stroke-width: 2.500; }
.map-svg text { dominant-baseline: middle; font-family: Roboto, sans-serif; }
.ml text { font-size: 14px; fill: #2a363a; }
.mlb text { fill: #2c4258; }
.mlbr text { fill: #54401c; }
.mlp text { fill: #6a2c42; }
.mlg text { fill: #24401f; }
.mlw text { fill: #26435f; }
.mh text { font-size: 14px; font-weight: 700; letter-spacing: 3.600px; fill: #2c2c2e; }
.mh .mh2 { font-size: 13px; letter-spacing: 2.600px; }
.ms text { font-size: 10.500px; fill: #3a3a3c; }
.ms .ms12 { font-size: 12px; }
.pt use { fill: #1f4a4e; }
.pb use { fill: #2a4470; }
.pbr use { fill: #55400f; }
.pg use { fill: #3f4347; }
.ppk use { fill: #7c2d45; }
.pin-dots circle { fill: rgba(255, 255, 255, .55); }
.boats rect { fill: #263a55; }
.tb-r { fill: none; stroke: #54212f; stroke-width: 1.500; }
.tb-b { stroke: #2b3a66; stroke-width: 1.500; }
.rl { fill: none; stroke: #54212f; stroke-width: 1.200; }
.hosp { fill: #a04a3c; }
.wm text { font-size: 15px; fill: rgba(255, 255, 255, .5); }
.marker { fill: #f7941d; }
.gm-dialog { position: absolute; left: 765px; top: 5px; width: 375px; height: 162px; background: #fff; border-radius: 3px; padding: 15px 26px 0; font-family: Roboto, sans-serif; box-shadow: 0 1px 3px rgba(0, 0, 0, .2); }
.gm-logo { font-family: "Open Sans", sans-serif; font-size: 18px; line-height: 26px; color: #757575; letter-spacing: -1px; margin-left: -1px; }
.gm-msg { margin-top: 12px; font-size: 14px; line-height: 24px; font-weight: 500; color: #202124; }
.gm-row { display: flex; justify-content: space-between; align-items: center; margin-top: 13px; font-size: 12px; color: #757575; }
.gm-row button { width: 68px; height: 36px; background: #fff; border: 1px solid #dadce0; border-radius: 4px; color: #1a73e8; font-family: Roboto, sans-serif; font-size: 14px; padding: 0; }
.gm-full { position: absolute; right: 10px; top: 10px; width: 40px; height: 40px; background: #fff; border: 0; border-radius: 2px; padding: 0; display: flex; align-items: center; justify-content: center; }
.gm-full svg { fill: none; stroke: #555; stroke-width: 2; }
.gm-mark { position: absolute; left: 6px; bottom: 2px; font-family: Roboto, sans-serif; font-weight: 700; font-size: 21px; line-height: 24px; color: #fff; letter-spacing: -.4px; text-shadow: 0 0 2px rgba(0, 0, 0, .5); }
.gm-attr { position: absolute; right: 0; bottom: 0; height: 14px; display: flex; background: #c9c9c9; font-family: Roboto, sans-serif; font-size: 10px; line-height: 14px; color: #222; }
.gm-attr span { padding: 0 6px 0 5px; border-right: 1px solid #e8e8e8; white-space: nowrap; }
.gm-attr span:last-child { border-right: 0; }
.scale { display: flex; }
.scale i { display: block; width: 70px; height: 6px; margin: 6px 0 0 4px; border: 2px solid #fff; border-top: 0; background: linear-gradient(#666, #666) center bottom / 100% 2px no-repeat; }

/* newsletter */
.news { height: 335px; padding-top: 99px; text-align: center; letter-spacing: .2px; }
.news h4 { font-size: 16px; line-height: 24px; font-weight: 600; color: #333; }
.news p { margin-top: 3px; font-size: 14px; line-height: 24px; color: #777; }
.news p b { font-weight: 400; color: #f7941d; }
.news-form { display: flex; width: 616px; height: 55px; margin: 30px 0 0 642px; }
.news-form input { flex: 1; min-width: 0; border: 2px solid #eee; border-right: 0; border-radius: 30px 0 0 30px; padding: 0 0 0 30px; font-size: 14px; outline: 0; letter-spacing: .3px; }
.news-form input::placeholder { color: #aaa; opacity: 1; }
.news-form button { width: 136px; background: #f7941d; color: #fff; border: 0; border-radius: 0 30px 30px 0; font-size: 14px; font-weight: 600; padding: 0 6px 0 0; letter-spacing: 0; }

/* footer */
.footer { background: #222; color: #f2f2f2; height: 478px; padding-top: 95px; }
.f-main { display: grid; grid-template-columns: 487px 195px 195px 1fr; height: 318px; }
.f-para { margin-top: 17px; letter-spacing: .4px; }
.f-q { margin-top: 15px; }
.f-phone { font-size: 20px; line-height: 24px; font-weight: 600; color: #f7941d; letter-spacing: -.4px; }
.footer h5 { font-size: 18px; line-height: 30px; font-weight: 600; color: #fff; letter-spacing: -.2px; }
.f-links { margin-top: 21px; letter-spacing: .45px; }
.f-links li { line-height: 32px; }
.f-addr { margin-top: 23px; letter-spacing: .08px; }
.f-addr li { line-height: 28px; }
.social { display: flex; align-items: center; margin-top: 20px; margin-left: 4px; height: 18px; }
.social svg { display: block; }
.s-f, .s-t { fill: none; }
.s-f { fill: #fff; }
.s-t { stroke: #fff; stroke-width: 1.300; margin-left: 31px; }
.s-fl { fill: #fff; margin-left: 28px; }
.s-fl .ring { fill: none; stroke: #fff; stroke-width: 1.200; }
.s-i { fill: none; stroke: #fff; stroke-width: 1.300; margin-left: 26px; }
.s-i .dot { fill: #fff; stroke: none; }
.f-bottom { border-top: 1px solid #555; height: 65px; display: flex; justify-content: space-between; align-items: center; letter-spacing: .2px; }
.f-bottom a { text-decoration: underline; }
.pay { display: flex; align-items: center; letter-spacing: 0; }
.p-card { display: flex; align-items: center; justify-content: center; height: 19px; font-family: "Liberation Sans", sans-serif; }
.p-white { background: #fff; }
.p-w30 { width: 31px; margin-right: 16px; }
.visa { color: #1a5fa8; font-size: 10px; font-style: italic; font-weight: 700; }
.p-pp { flex-direction: column; }
.pp { color: #1d3f8c; font-size: 11px; line-height: 11px; font-style: italic; font-weight: 700; }
.p-pp em { font-size: 5px; line-height: 6px; color: #1d6fb8; font-weight: 700; }
.p-mc { width: 32px; height: 20px; background: #000; border-radius: 2px; margin-right: 17px; }
.mc1 { fill: #eb1c26; }
.mc2 { fill: #f79e1b; }
.p-amex { width: 32px; height: 20px; background: #2e77bc; margin-right: 16px; flex-direction: column; }
.p-amex em { font-size: 4px; line-height: 5px; font-style: normal; color: #dfe9f5; }
.p-vb { width: 32px; height: 20px; background: #0a66b4; margin-right: 16px; color: #fff; flex-direction: column; }
.p-vb b { font-size: 9px; line-height: 9px; font-style: italic; }
.p-vb em { font-size: 4px; line-height: 5px; font-style: normal; }
.p-ap { width: 31px; font-size: 10px; color: #222; gap: 1px; border: 1px solid #777; height: 20px; }
.p-ap svg { fill: #222; }
```
